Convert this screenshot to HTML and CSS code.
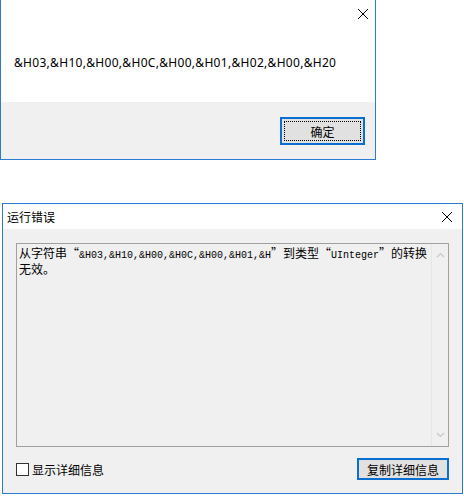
FILE: index.html
```html
<!DOCTYPE html>
<html lang="zh-CN">
<head>
  <meta charset="UTF-8" />
  <title>运行错误</title>
  <link rel="stylesheet" href="styles.css">
</head>
<body>
  <div class="msgbox">
    <div class="msg-top">
      <svg class="close" width="12" height="12" viewBox="0 0 12 12"><path d="M1 1L11 11M11 1L1 11" stroke="#000" stroke-width="1"/></svg>
    </div>
    <div class="msg-body">&amp;H03,&amp;H10,&amp;H00,&amp;H0C,&amp;H00,&amp;H01,&amp;H02,&amp;H00,&amp;H20</div>
    <div class="msg-foot">
      <button class="btn ok"><span class="focus">确定</span></button>
    </div>
  </div>

  <div class="errbox">
    <div class="titlebar">
      <span class="title">运行错误</span>
      <svg class="close" width="12" height="12" viewBox="0 0 12 12"><path d="M1 1L11 11M11 1L1 11" stroke="#000" stroke-width="1"/></svg>
    </div>
    <div class="err-body">
      <div class="textbox">
        <div class="text">从字符串<span class="q open">“</span><span class="mono">&amp;H03,&amp;H10,&amp;H00,&amp;H0C,&amp;H00,&amp;H01,&amp;H</span><span class="q close-q">”</span>到类型<span class="q open">“</span><span class="mono">UInteger</span><span class="q close-q">”</span>的转换<br>无效。</div>
        <div class="scroll">
          <svg width="9" height="6" viewBox="0 0 9 6"><path d="M1 5L4.5 1.5L8 5" fill="none" stroke="#c8c8c8" stroke-width="1.2"/></svg>
          <svg width="9" height="6" viewBox="0 0 9 6"><path d="M1 1L4.5 4.5L8 1" fill="none" stroke="#c8c8c8" stroke-width="1.2"/></svg>
        </div>
      </div>
      <div class="err-foot">
        <label class="check"><span class="box"></span>显示详细信息</label>
        <button class="btn copy">复制详细信息</button>
      </div>
    </div>
  </div>
</body>
</html>
```

FILE: styles.css
```css
body {
  margin: 0;
  background: #fff;
  font-family: "Noto Sans", "Noto Sans CJK SC", sans-serif;
  font-size: 12px;
  color: #000;
}
.msgbox {
  width: 374px;
  height: 159px;
  border: 1px solid #2b7bd3;
  border-top: none;
  display: flex;
  flex-direction: column;
  background: #fff;
}
.msg-top {
  height: 28px;
  display: flex;
  justify-content: flex-end;
  align-items: center;
}
.msg-top .close {
  margin-right: 6px;
}
.msg-body {
  height: 74px;
  padding-left: 13px;
  box-sizing: border-box;
  padding-top: 27px;
  line-height: 16px;
  letter-spacing: 0.3px;
}
.msg-foot {
  flex: 1;
  background: #f0f0f0;
  display: flex;
  justify-content: flex-end;
  align-items: flex-start;
  padding: 15px 10px 0 0;
}
.btn {
  font-family: "Noto Sans CJK SC", sans-serif;
  font-size: 12px;
  background: #e1e1e1;
  border: 2px solid #0a6fd0;
  padding: 0;
  color: #000;
  box-sizing: border-box;
}
.btn.ok {
  width: 85px;
  height: 28px;
  padding: 2px;
}
.btn.ok .focus {
  display: flex;
  justify-content: center;
  align-items: center;
  height: 100%;
  border: 1px dotted #000;
  box-sizing: border-box;
}
.errbox {
  margin: 43px 0 0 2px;
  width: 459px;
  height: 289px;
  border: 1px solid #2b7bd3;
  background: #f0f0f0;
  display: flex;
  flex-direction: column;
}
.titlebar {
  height: 25px;
  background: #fff;
  display: flex;
  align-items: center;
  justify-content: space-between;
  padding: 0 9px 0 4px;
}
.title {
  font-family: "Noto Sans CJK SC", sans-serif;
  font-size: 12px;
}
.err-body {
  flex: 1;
  padding: 14px 13px 0 13px;
  display: flex;
  flex-direction: column;
}
.textbox {
  height: 204px;
  border: 1px solid #a0a0a0;
  display: flex;
  box-sizing: border-box;
}
.text {
  flex: 1;
  padding: 2px 0 0 2px;
  font-family: "Noto Sans CJK SC", sans-serif;
  font-size: 12px;
  line-height: 13px;
  white-space: nowrap;
}
.q {
  display: inline-block;
  width: 12px;
}
.q.open {
  text-align: right;
}
.q.close-q {
  text-align: left;
}
.mono {
  font-family: "Liberation Mono", monospace;
  font-size: 10px;
}
.scroll {
  width: 16px;
  border-left: 1px solid #e6e6e6;
  display: flex;
  flex-direction: column;
  justify-content: space-between;
  align-items: center;
  padding: 8px 0 8px;
}
.err-foot {
  display: flex;
  justify-content: space-between;
  align-items: center;
  margin-top: 11px;
}
.check {
  display: flex;
  align-items: center;
  gap: 3px;
  font-family: "Noto Sans CJK SC", sans-serif;
  margin-top: 1px;
}
.check .box {
  width: 11px;
  height: 11px;
  border: 1px solid #333;
  background: #fff;
}
.btn.copy {
  width: 92px;
  height: 22px;
  font-size: 12px;
}
```
